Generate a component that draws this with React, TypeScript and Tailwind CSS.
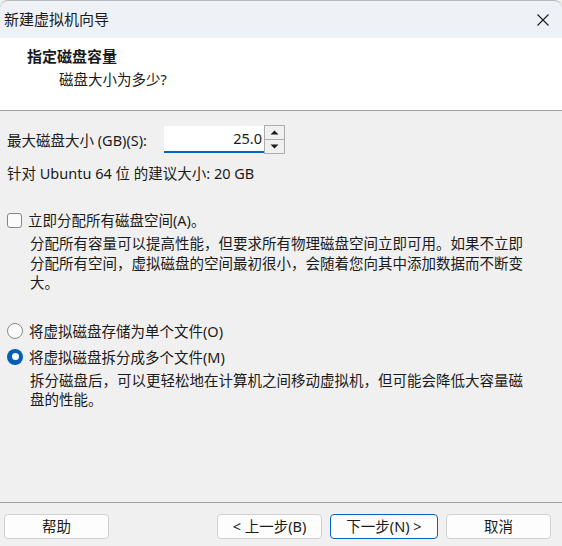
import React from "react";

const font = {
  fontFamily: '"Noto Sans", "Noto Sans CJK SC", sans-serif',
};

function Button({
  label,
  primary,
}: {
  label: string;
  primary?: boolean;
}) {
  return (
    <button
      className={
        primary
          ? "w-[108px] h-[25px] rounded-[4px] border border-[#0067c0] bg-[#fdfdfd] text-[14.5px] leading-none text-[#1b1b1b]"
          : "w-[105px] h-[25px] rounded-[4px] border border-[#d0d0d0] bg-[#fdfdfd] text-[14.5px] leading-none text-[#1b1b1b]"
      }
    >
      {label}
    </button>
  );
}

function Spinner() {
  return (
    <div className="flex flex-col w-[21px] h-[29px] border border-[#adadad] bg-[#f0f0f0]">
      <div className="flex-1 flex items-center justify-center border-b border-[#adadad]">
        <svg width="9" height="5" viewBox="0 0 9 5">
          <path d="M0.5 4.5 L4.5 0.5 L8.5 4.5 Z" fill="#1b1b1b" />
        </svg>
      </div>
      <div className="flex-1 flex items-center justify-center">
        <svg width="9" height="5" viewBox="0 0 9 5">
          <path d="M0.5 0.5 L4.5 4.5 L8.5 0.5 Z" fill="#1b1b1b" />
        </svg>
      </div>
    </div>
  );
}

export default function App() {
  return (
    <div
      className="w-[562px] h-[546px] flex flex-col bg-[#f0f0f0] text-[#1b1b1b] overflow-hidden"
      style={font}
    >
      {/* title bar */}
      <div className="h-[38px] shrink-0 flex items-center justify-between pl-[4px] pr-[13px] bg-[#eef2f7] border-t border-[#b8b8b8] rounded-t-[8px]">
        <span className="text-[15px] leading-none">新建虚拟机向导</span>
        <svg width="12" height="12" viewBox="0 0 12 12">
          <path d="M0.5 0.5 L11.5 11.5 M11.5 0.5 L0.5 11.5" stroke="#1b1b1b" strokeWidth="1.1" />
        </svg>
      </div>

      {/* header */}
      <div className="h-[73px] shrink-0 bg-white border-b border-[#a0a0a0] pt-[8px]">
        <div className="pl-[27px] text-[15px] leading-[20px] font-bold">指定磁盘容量</div>
        <div className="pl-[59px] mt-[3px] text-[14.5px] leading-[20px]">磁盘大小为多少?</div>
      </div>

      {/* body */}
      <div className="flex-1 px-[7px] pt-[14px] text-[14.5px]">
        <div className="flex items-center h-[29px]">
          <span className="w-[157px] leading-[20px]">最大磁盘大小 (GB)(S):</span>
          <div className="w-[100px] h-[27px] bg-white border-b-2 border-[#0067c0] flex items-center justify-end pr-[2px]">
            25.0
          </div>
          <Spinner />
        </div>
        <div className="mt-[9px] leading-[20px]">针对 Ubuntu 64 位 的建议大小: 20 GB</div>

        <label className="mt-[27px] flex items-center gap-[6px] leading-[20px]">
          <span className="w-[15px] h-[15px] rounded-[3px] border border-[#858585] bg-[#fbfbfb]" />
          立即分配所有磁盘空间(A)。
        </label>
        <p className="mt-[4px] ml-[23px] w-[505px] leading-[19.5px]">
          分配所有容量可以提高性能，但要求所有物理磁盘空间立即可用。如果不立即分配所有空间，虚拟磁盘的空间最初很小，会随着您向其中添加数据而不断变大。
        </p>

        <label className="mt-[28px] flex items-center gap-[6px] leading-[20px]">
          <span className="w-[16px] h-[16px] rounded-full border border-[#8a8a8a] bg-[#fbfbfb]" />
          将虚拟磁盘存储为单个文件(O)
        </label>
        <label className="mt-[6px] flex items-center gap-[6px] leading-[20px]">
          <span className="w-[16px] h-[16px] rounded-full bg-[#005fb8] flex items-center justify-center">
            <span className="w-[7px] h-[7px] rounded-full bg-white" />
          </span>
          将虚拟磁盘拆分成多个文件(M)
        </label>
        <p className="mt-[4px] ml-[23px] w-[505px] leading-[19.5px]">
          拆分磁盘后，可以更轻松地在计算机之间移动虚拟机，但可能会降低大容量磁盘的性能。
        </p>
      </div>

      {/* footer */}
      <div className="h-[44px] shrink-0 border-t border-[#a0a0a0] flex items-start pt-[11px] px-[4px]">
        <Button label="帮助" />
        <div className="flex-1" />
        <div className="flex gap-[8px] pr-[7px]">
          <Button label="< 上一步(B)" />
          <Button label="下一步(N) >" primary />
          <Button label="取消" />
        </div>
      </div>
    </div>
  );
}
